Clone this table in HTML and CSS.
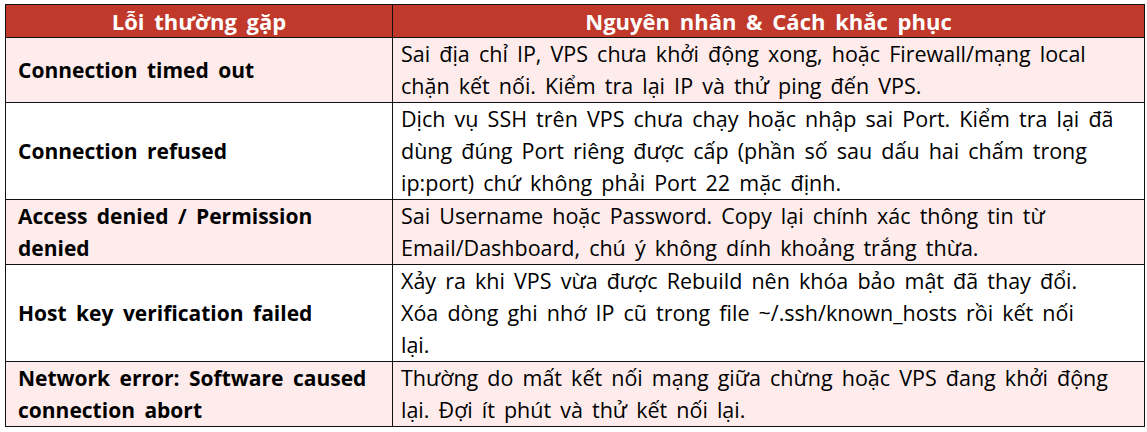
FILE: index.html
```html
<!DOCTYPE html>
<html lang="vi">
<head>
<meta charset="utf-8">
<title>Lỗi thường gặp</title>
<link rel="stylesheet" href="styles.css">
</head>
<body>
<table class="errors">
  <colgroup>
    <col class="col-error">
    <col class="col-fix">
  </colgroup>
  <thead>
    <tr>
      <th>Lỗi thường gặp</th>
      <th>Nguyên nhân &amp; Cách khắc phục</th>
    </tr>
  </thead>
  <tbody>
    <tr class="alt">
      <td class="err">Connection timed out</td>
      <td class="fix">Sai địa chỉ IP, VPS chưa khởi động xong, hoặc Firewall/mạng local<br>chặn kết nối. Kiểm tra lại IP và thử ping đến VPS.</td>
    </tr>
    <tr>
      <td class="err">Connection refused</td>
      <td class="fix">Dịch vụ SSH trên VPS chưa chạy hoặc nhập sai Port. Kiểm tra lại đã<br>dùng đúng Port riêng được cấp (phần số sau dấu hai chấm trong<br>ip:port) chứ không phải Port 22 mặc định.</td>
    </tr>
    <tr class="alt">
      <td class="err">Access denied / Permission<br>denied</td>
      <td class="fix">Sai Username hoặc Password. Copy lại chính xác thông tin từ<br>Email/Dashboard, chú ý không dính khoảng trắng thừa.</td>
    </tr>
    <tr>
      <td class="err">Host key verification failed</td>
      <td class="fix">Xảy ra khi VPS vừa được Rebuild nên khóa bảo mật đã thay đổi.<br>Xóa dòng ghi nhớ IP cũ trong file ~/.ssh/known_hosts rồi kết nối<br>lại.</td>
    </tr>
    <tr class="alt">
      <td class="err">Network error: Software caused<br>connection abort</td>
      <td class="fix">Thường do mất kết nối mạng giữa chừng hoặc VPS đang khởi động<br>lại. Đợi ít phút và thử kết nối lại.</td>
    </tr>
  </tbody>
</table>
</body>
</html>
```

FILE: styles.css
```css
html, body {
  margin: 0;
  background: #ffffff;
}

body {
  padding: 4px 0 0 5px;
  font-family: "Open Sans", "Noto Sans", sans-serif;
  color: #000000;
}

.errors {
  border-collapse: collapse;
  width: 1139px;
  table-layout: fixed;
  font-size: 21.5px;
  line-height: 32px;
  word-spacing: 3.5px;
}

.col-error {
  width: 387px;
}

.col-fix {
  width: 752px;
}

.errors th,
.errors td {
  border: 1px solid #111111;
  padding: 0;
}

.errors th {
  background: #c0392b;
  color: #ffffff;
  font-weight: 700;
  font-size: 22px;
  text-align: center;
  height: 32px;
  word-spacing: 4px;
}

.errors tr.alt td {
  background: #fdeceb;
}

.err {
  font-weight: 700;
  font-size: 21px;
  word-spacing: 4px;
  vertical-align: middle;
  padding: 0 6px 0 12px !important;
}

.fix {
  vertical-align: top;
  padding: 0 6px 0 8px !important;
  white-space: nowrap;
}
```
